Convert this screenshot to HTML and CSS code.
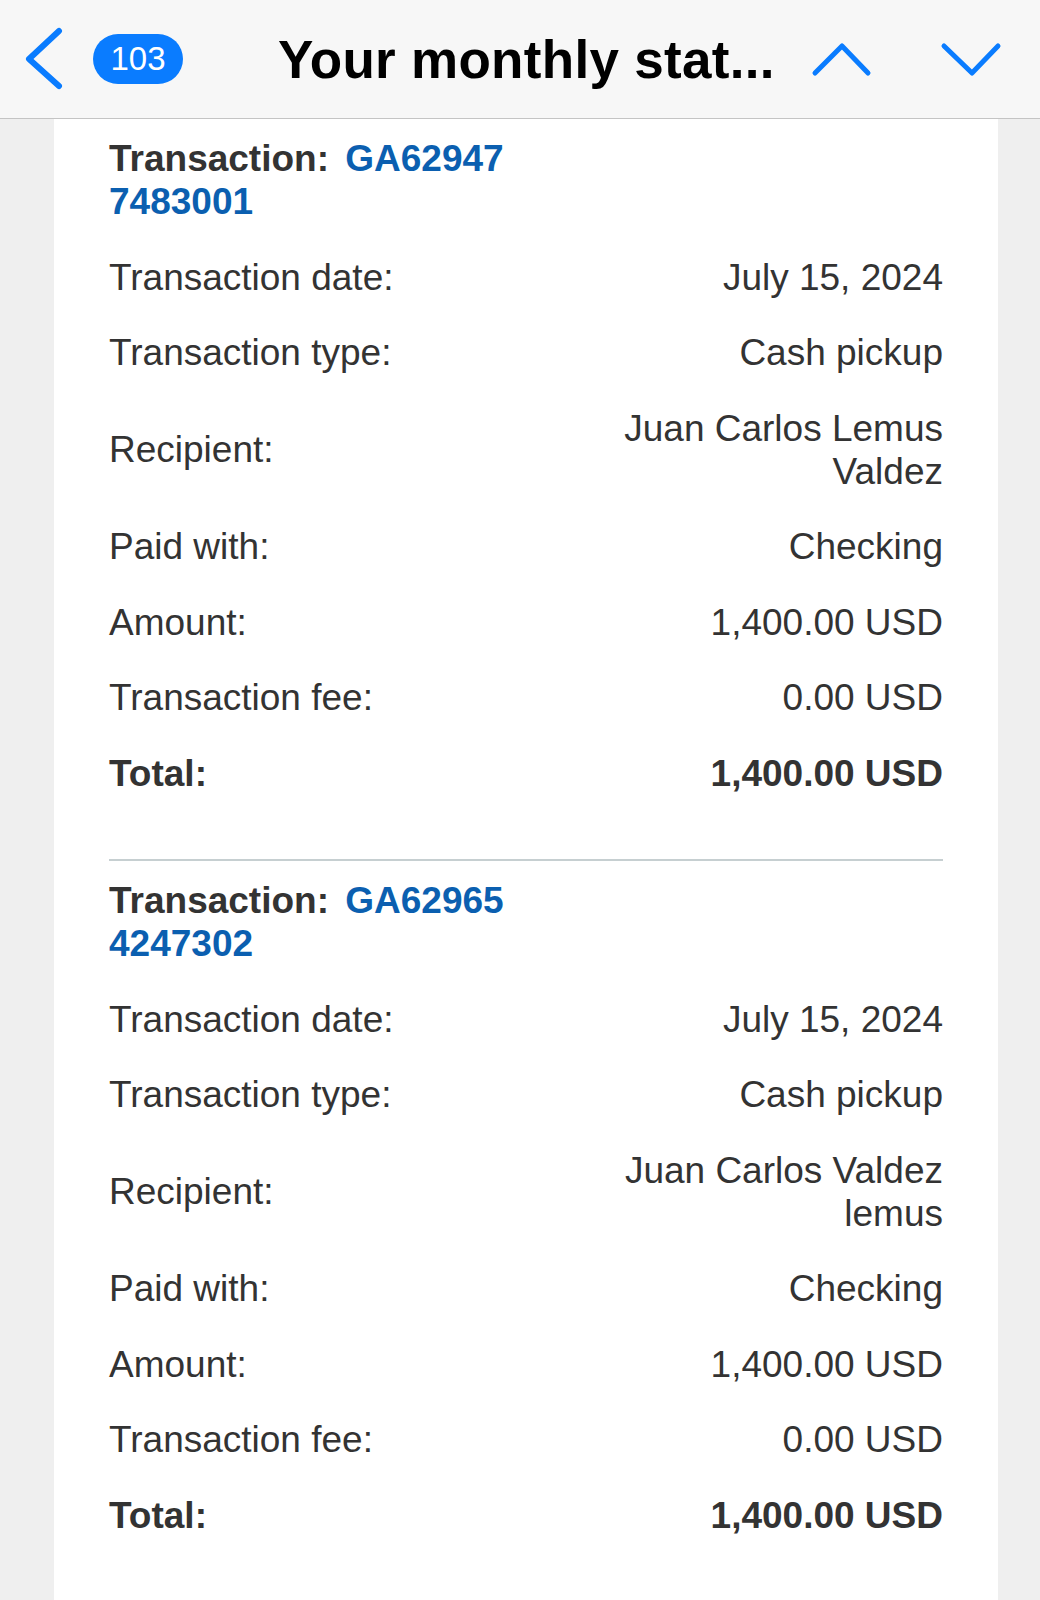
FILE: index.html
```html
<!DOCTYPE html>
<html lang="en">
<head>
    <meta charset="UTF-8">
    <meta name="viewport" content="width=device-width, initial-scale=1.0">
    <title>Your monthly statement</title>
    <link rel="stylesheet" href="styles.css">
</head>
<body>
    <header class="topbar">
        <svg class="back" width="40" height="64" viewBox="0 0 40 64">
            <polyline points="35,4 5,32 35,59" />
        </svg>
        <span class="badge">103</span>
        <h1 class="title">Your monthly stat...</h1>
        <svg class="arrow up" width="64" height="40" viewBox="0 0 64 40">
            <polyline points="6,34 33,7 59,34" />
        </svg>
        <svg class="arrow down" width="64" height="40" viewBox="0 0 64 40">
            <polyline points="6,7 34,34 60,7" />
        </svg>
    </header>

    <main class="mail">
        <section class="transaction">
            <div class="row head">
                <p class="txn-id"><b>Transaction:</b> <span class="id">GA62947</span><br><span class="id">7483001</span></p>
            </div>
            <div class="row"><span class="label">Transaction date:</span><span class="value">July 15, 2024</span></div>
            <div class="row"><span class="label">Transaction type:</span><span class="value">Cash pickup</span></div>
            <div class="row"><span class="label">Recipient:</span><span class="value">Juan Carlos Lemus Valdez</span></div>
            <div class="row"><span class="label">Paid with:</span><span class="value">Checking</span></div>
            <div class="row"><span class="label">Amount:</span><span class="value">1,400.00 USD</span></div>
            <div class="row"><span class="label">Transaction fee:</span><span class="value">0.00 USD</span></div>
            <div class="row total"><span class="label">Total:</span><span class="value">1,400.00 USD</span></div>
        </section>

        <section class="transaction">
            <div class="row head">
                <p class="txn-id"><b>Transaction:</b> <span class="id">GA62965</span><br><span class="id">4247302</span></p>
            </div>
            <div class="row"><span class="label">Transaction date:</span><span class="value">July 15, 2024</span></div>
            <div class="row"><span class="label">Transaction type:</span><span class="value">Cash pickup</span></div>
            <div class="row"><span class="label">Recipient:</span><span class="value">Juan Carlos Valdez lemus</span></div>
            <div class="row"><span class="label">Paid with:</span><span class="value">Checking</span></div>
            <div class="row"><span class="label">Amount:</span><span class="value">1,400.00 USD</span></div>
            <div class="row"><span class="label">Transaction fee:</span><span class="value">0.00 USD</span></div>
            <div class="row total"><span class="label">Total:</span><span class="value">1,400.00 USD</span></div>
        </section>
    </main>
</body>
</html>
```

FILE: styles.css
```css
body {
    margin: 0;
    background: #efefef;
    font-family: 'Liberation Sans', Arial, sans-serif;
    color: #333;
}

.topbar {
    display: flex;
    align-items: center;
    height: 118px;
    padding: 0 38px 0 24px;
    background: #f7f7f7;
    border-bottom: 1px solid #c4c4c4;
}

.topbar svg polyline {
    fill: none;
    stroke: #0a7cff;
    stroke-linecap: round;
    stroke-linejoin: round;
}

.back polyline {
    stroke-width: 6;
}

.arrow polyline {
    stroke-width: 5;
}

.badge {
    margin-left: 29px;
    width: 90px;
    height: 50px;
    border-radius: 25px;
    background: #0a7cff;
    color: #fff;
    font-size: 33px;
    line-height: 50px;
    text-align: center;
}

.title {
    margin: 0 0 0 95px;
    font-size: 53px;
    font-weight: bold;
    color: #000;
    white-space: nowrap;
    letter-spacing: 0.3px;
}

.arrow.up {
    margin-left: auto;
}

.arrow.down {
    margin-left: 65px;
}

.mail {
    margin: 0 42px 0 54px;
    padding: 0 55px;
    min-height: 1481px;
    background: #fff;
}

.transaction {
    padding: 2px 0 48px;
}

.transaction + .transaction {
    border-top: 2px solid #c6cfd1;
}

.row {
    display: flex;
    justify-content: space-between;
    align-items: center;
    padding: 16.25px 0;
    font-size: 37px;
    line-height: 43px;
}

.txn-id {
    margin: 0;
}

.txn-id b + .id {
    margin-left: 6px;
}

.id {
    color: #0b5fb0;
    font-weight: bold;
}

.value {
    max-width: 50%;
    text-align: right;
}

.total {
    font-weight: bold;
}
```
